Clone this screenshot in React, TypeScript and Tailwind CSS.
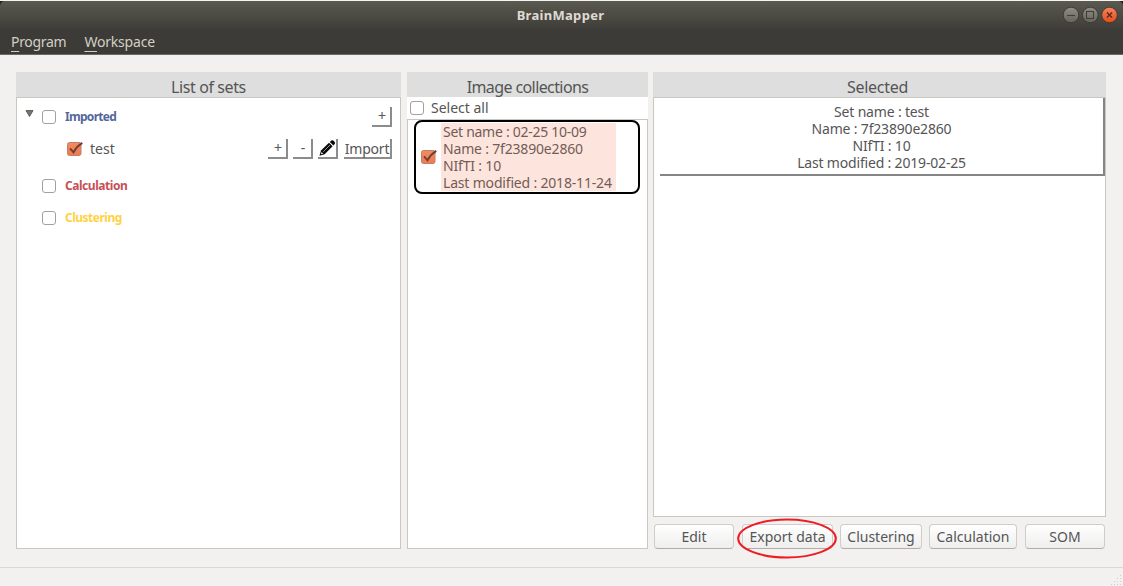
import type { ReactNode } from "react";

function Check({ checked = false }: { checked?: boolean }) {
  if (!checked) {
    return <span className="block h-[14px] w-[14px] shrink-0 rounded-[3px] border border-[#a3a19e] bg-white" />;
  }
  return (
    <svg className="block h-[16px] w-[16px] shrink-0" viewBox="0 0 16 16">
      <defs>
        <linearGradient id="boxFill" x1="0" y1="0" x2="0" y2="1">
          <stop offset="0" stopColor="#f38a62" />
          <stop offset="1" stopColor="#ee7a50" />
        </linearGradient>
      </defs>
      <rect x="0.5" y="1.5" width="13.5" height="13" rx="2" fill="url(#boxFill)" stroke="#c08068" />
      <path d="M3 7.4 L6.5 11.3 C8.5 7.5 11 4.5 15.3 1.9" fill="none" stroke="#6e4030" strokeWidth="1.9" />
    </svg>
  );
}

function Header({ children, className }: { children: ReactNode; className: string }) {
  return (
    <div className={`flex h-[25px] shrink-0 items-center justify-center bg-[#dedede] pt-[5px] text-[16px] leading-[20px] text-[#555] ${className}`}>
      {children}
    </div>
  );
}

function Flat({ children, className }: { children: ReactNode; className: string }) {
  return (
    <button
      className={`flex h-[20px] items-center justify-center border-r-2 border-b-2 border-[#8c8c8c] bg-white leading-[18px] text-[#555] ${className}`}
    >
      {children}
    </button>
  );
}

function Action({ children, className }: { children: ReactNode; className: string }) {
  return (
    <button
      className={`flex h-[25px] items-center justify-center rounded-[4px] border border-[#cfcdca] border-b-[#b0aeab] bg-linear-to-b from-white to-[#efeeed] text-[14px] leading-[20px] text-[#555] ${className}`}
    >
      {children}
    </button>
  );
}

function WindowButtons() {
  return (
    <svg className="h-[18px] w-[56px]" viewBox="0 0 56 18">
      <defs>
        <linearGradient id="grayKnob" x1="0" y1="0" x2="0" y2="1">
          <stop offset="0" stopColor="#908e86" />
          <stop offset="1" stopColor="#65635c" />
        </linearGradient>
        <linearGradient id="redKnob" x1="0" y1="0" x2="0" y2="1">
          <stop offset="0" stopColor="#f88460" />
          <stop offset="1" stopColor="#e24b18" />
        </linearGradient>
      </defs>
      <circle cx="8" cy="9" r="7.8" fill="url(#grayKnob)" stroke="#35342f" strokeWidth="0.8" />
      <circle cx="27.3" cy="9" r="7.8" fill="url(#grayKnob)" stroke="#35342f" strokeWidth="0.8" />
      <circle cx="46.5" cy="9" r="7.8" fill="url(#redKnob)" stroke="#35342f" strokeWidth="0.8" />
      <path d="M4 9.5 H12" stroke="#3f3e39" strokeWidth="1.1" />
      <rect x="23.5" y="5.5" width="7" height="7" fill="none" stroke="#3f3e39" strokeWidth="1.1" />
      <path d="M44 6.5 L49 11.5 M49 6.5 L44 11.5" stroke="#5c2c19" strokeWidth="1.5" />
    </svg>
  );
}

export default function App() {
  return (
    <div className="flex h-[586px] w-[1123px] flex-col overflow-hidden bg-[#f2f1f0] font-['Noto_Sans','Open_Sans',sans-serif] text-[14px] text-[#555]">
      <div className="h-px shrink-0 bg-[#f4f4f2]" />
      <div className="bg-[#2b1c24]">
        <div className="grid h-[28px] shrink-0 grid-cols-[60px_1fr_60px] items-center rounded-t-[5px] bg-linear-to-b from-[#5b5a50] to-[#3e3d38]">
          <span />
          <span className="-ml-[2px] text-center text-[13px] font-bold leading-[20px] tracking-[0.3px] text-[#dfdbd2]">BrainMapper</span>
          <WindowButtons />
        </div>
      </div>
      <nav className="flex h-[26px] shrink-0 gap-[18px] border-b border-[#6b6a66] bg-[#3c3b37] pl-[11px] pt-[3px] leading-[20px] text-[#d3cfc4]">
        <span className="tracking-[-0.3px]"><span className="underline underline-offset-[4px]">P</span>rogram</span>
        <span className="tracking-[-0.2px]"><span className="underline underline-offset-[4px]">W</span>orkspace</span>
      </nav>

      <main className="flex h-[513px] shrink-0 border-b border-[#d9d8d6] pl-[16px] pt-[17px]">
        <section className="mr-[6px] flex h-[477px] w-[385px] flex-col">
          <Header className="tracking-[-0.4px]">List of sets</Header>
          <div className="flex flex-1 flex-col border border-[#c8c7c2] bg-white">
            <div className="flex h-[37px] items-center pl-[8px] pr-[8px]">
              <svg className="mb-[7px] h-[7px] w-[9px]" viewBox="0 0 9 7">
                <path d="M1 0.6 H8 L4.5 6.5 Z" fill="#777" stroke="#444" strokeWidth="0.8" />
              </svg>
              <span className="ml-[8px]"><Check /></span>
              <span className="ml-[9px] flex-1 text-[12px] font-bold tracking-[-0.7px] text-[#53679c]">Imported</span>
              <Flat className="w-[20px] pl-[2px] text-[14px]">+</Flat>
            </div>
            <div className="flex h-[28px] items-center pl-[50px] pr-[8px]">
              <Check checked />
              <span className="relative -top-px ml-[7px] flex-1">test</span>
              <Flat className="mr-[5px] w-[20px] pl-[2px] text-[14px]">+</Flat>
              <Flat className="mr-[5px] w-[20px] pl-[2px] text-[14px]">-</Flat>
              <Flat className="mr-[6px] w-[20px]">
                <svg className="h-[18px] w-[18px]" viewBox="0 0 18 18">
                  <path d="M1.5 16.8 L3 11.5 L11 3.7 L14.6 7.2 L6.6 15.2 Z" fill="#090909" />
                  <path d="M11.8 2.9 L13.4 1.5 Q14.6 0.8 15.6 1.7 L16.7 2.9 Q17.5 3.9 16.8 4.8 L15.4 6.4 Z" fill="#090909" />
                  <path d="M5.2 12.8 L12 6" stroke="#aaa" strokeWidth="0.9" />
                  <path d="M3.5 13 L5.1 14.7 L3 15.2 Z" fill="#fff" />
                </svg>
              </Flat>
              <Flat className="w-[48px] pt-[2px] tracking-[-0.2px]">Import</Flat>
            </div>
            <div className="mt-[7px] flex h-[32px] items-center pl-[25px]">
              <Check />
              <span className="ml-[9px] text-[12px] font-bold tracking-[-0.45px] text-[#c74f57]">Calculation</span>
            </div>
            <div className="flex h-[32px] items-center pl-[25px]">
              <Check />
              <span className="ml-[9px] text-[12px] font-bold tracking-[-0.5px] text-[#ffd244]">Clustering</span>
            </div>
          </div>
        </section>

        <section className="mr-[5px] flex h-[477px] w-[241px] flex-col">
          <Header className="tracking-[-0.6px]">Image collections</Header>
          <div className="flex h-[22px] shrink-0 items-center bg-white pl-[3px]">
            <Check />
            <span className="ml-[7px] pb-px">Select all</span>
          </div>
          <div className="flex-1 border border-[#c8c7c2] bg-white pl-[6px]">
            <div className="flex h-[74px] w-[226px] items-center rounded-[8px] border-2 border-black pl-[5px]">
              <Check checked />
              <div className="ml-[4px] h-[68px] w-[175px] whitespace-nowrap bg-[#fde5dd] pl-[2px] leading-[17px] tracking-[-0.18px] text-[#735c57]">
                <div className="tracking-[-0.28px]">Set name : 02-25 10-09</div>
                <div>Name : 7f23890e2860</div>
                <div>NIfTI : 10</div>
                <div>Last modified : 2018-11-24</div>
              </div>
            </div>
          </div>
        </section>

        <section className="flex h-[477px] w-[453px] flex-col">
          <Header className="pr-[4px] tracking-[-0.3px]">Selected</Header>
          <div className="h-[420px] shrink-0 border border-[#c8c7c2] bg-white pl-[6px]">
            <div className="h-[78px] border-r-2 border-b-2 border-[#858585] pt-[5px] text-center leading-[17px] tracking-[-0.18px]">
              <div>Set name : test</div>
              <div>Name : 7f23890e2860</div>
              <div>NIfTI : 10</div>
              <div>Last modified : 2019-02-25</div>
            </div>
          </div>
          <div className="mt-[7px] flex pl-px">
            <Action className="mr-[8px] w-[80px]">Edit</Action>
            <div className="relative mr-[7px]">
              <Action className="w-[91px]">Export data</Action>
              <svg className="pointer-events-none absolute -left-[6px] -top-[6px] h-[42px] w-[102px]" viewBox="0 0 102 42">
                <ellipse cx="51" cy="20.5" rx="48.8" ry="19" fill="none" stroke="#ee1c25" strokeWidth="2" />
              </svg>
            </div>
            <Action className="mr-[7px] w-[82px]">Clustering</Action>
            <Action className="mr-[8px] w-[88px]">Calculation</Action>
            <Action className="w-[80px]">SOM</Action>
          </div>
        </section>
      </main>
      <footer className="flex flex-1 items-end justify-end">
        <svg className="h-[12px] w-[12px]" viewBox="0 0 12 12" fill="#cfcecb">
          <path d="M9 1h1v1h-1z M9 4h1v1h-1z M6 4h1v1h-1z M9 7h1v1h-1z M6 7h1v1h-1z M3 7h1v1h-1z M9 10h1v1h-1z M6 10h1v1h-1z M3 10h1v1h-1z M0 10h1v1h-1z" />
        </svg>
      </footer>
    </div>
  );
}
